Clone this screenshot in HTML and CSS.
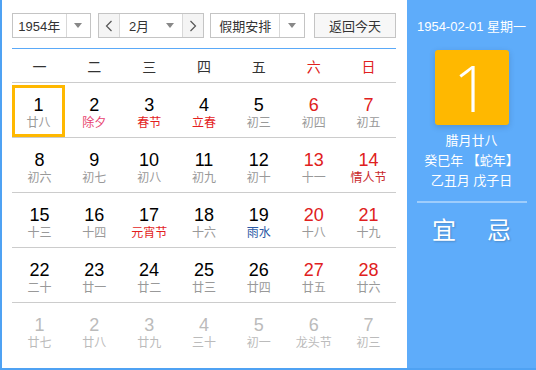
FILE: index.html
```html
<!DOCTYPE html>
<html lang="zh-CN">
<head>
    <meta charset="UTF-8">
    <title>万年历</title>
    <link rel="stylesheet" href="styles.css">
</head>
<body>
    <div class="calendar">
        <div class="main">
            <div class="toolbar">
                <div class="select year">
                    <span class="value">1954年</span>
                    <span class="arrow"><i></i></span>
                </div>
                <div class="select month">
                    <span class="step">
                        <svg width="8" height="12" viewBox="0 0 8 12"><polyline points="6.5,1 1.5,6 6.5,11" fill="none" stroke="#555" stroke-width="1.2"/></svg>
                    </span>
                    <span class="value">2月</span>
                    <span class="arrow"><i></i></span>
                    <span class="step">
                        <svg width="8" height="12" viewBox="0 0 8 12"><polyline points="1.5,1 6.5,6 1.5,11" fill="none" stroke="#555" stroke-width="1.2"/></svg>
                    </span>
                </div>
                <div class="select holiday">
                    <span class="value">假期安排</span>
                    <span class="arrow"><i></i></span>
                </div>
                <button class="today">返回今天</button>
            </div>

            <div class="week">
                <span>一</span><span>二</span><span>三</span><span>四</span><span>五</span>
                <span class="red">六</span><span class="red">日</span>
            </div>

            <div class="days">
                <div class="row">
                    <div class="day selected"><b>1</b><em>廿八</em></div>
                    <div class="day"><b>2</b><em class="eve">除夕</em></div>
                    <div class="day"><b>3</b><em class="fest">春节</em></div>
                    <div class="day"><b>4</b><em class="fest">立春</em></div>
                    <div class="day"><b>5</b><em>初三</em></div>
                    <div class="day weekend"><b>6</b><em>初四</em></div>
                    <div class="day weekend"><b>7</b><em>初五</em></div>
                </div>
                <div class="row">
                    <div class="day"><b>8</b><em>初六</em></div>
                    <div class="day"><b>9</b><em>初七</em></div>
                    <div class="day"><b>10</b><em>初八</em></div>
                    <div class="day"><b>11</b><em>初九</em></div>
                    <div class="day"><b>12</b><em>初十</em></div>
                    <div class="day weekend"><b>13</b><em>十一</em></div>
                    <div class="day weekend"><b>14</b><em class="valentine">情人节</em></div>
                </div>
                <div class="row">
                    <div class="day"><b>15</b><em>十三</em></div>
                    <div class="day"><b>16</b><em>十四</em></div>
                    <div class="day"><b>17</b><em class="fest">元宵节</em></div>
                    <div class="day"><b>18</b><em>十六</em></div>
                    <div class="day"><b>19</b><em class="term">雨水</em></div>
                    <div class="day weekend"><b>20</b><em>十八</em></div>
                    <div class="day weekend"><b>21</b><em>十九</em></div>
                </div>
                <div class="row">
                    <div class="day"><b>22</b><em>二十</em></div>
                    <div class="day"><b>23</b><em>廿一</em></div>
                    <div class="day"><b>24</b><em>廿二</em></div>
                    <div class="day"><b>25</b><em>廿三</em></div>
                    <div class="day"><b>26</b><em>廿四</em></div>
                    <div class="day weekend"><b>27</b><em>廿五</em></div>
                    <div class="day weekend"><b>28</b><em>廿六</em></div>
                </div>
                <div class="row">
                    <div class="day other"><b>1</b><em>廿七</em></div>
                    <div class="day other"><b>2</b><em>廿八</em></div>
                    <div class="day other"><b>3</b><em>廿九</em></div>
                    <div class="day other"><b>4</b><em>三十</em></div>
                    <div class="day other"><b>5</b><em>初一</em></div>
                    <div class="day other"><b>6</b><em>龙头节</em></div>
                    <div class="day other"><b>7</b><em>初三</em></div>
                </div>
            </div>
        </div>

        <div class="side">
            <div class="date">1954-02-01 星期一</div>
            <div class="big">1</div>
            <div class="lunar">
                <p>腊月廿八</p>
                <p>癸巳年 【蛇年】</p>
                <p>乙丑月 戊子日</p>
            </div>
            <div class="divider"></div>
            <div class="yiji">
                <span>宜</span>
                <span>忌</span>
            </div>
        </div>
    </div>
</body>
</html>
```

FILE: styles.css
```css
* {
    box-sizing: border-box;
}
body {
    margin: 0;
    font-family: "Liberation Sans", "Noto Sans CJK SC", sans-serif;
    background: #fff;
}
.calendar {
    display: flex;
    width: 536px;
    height: 370px;
    border-left: 2px solid #4fa2f3;
    border-bottom: 2px solid #4fa2f3;
}
.main {
    width: 405px;
    padding: 13px 11px 0 10px;
    background: #fff;
}

/* toolbar */
.toolbar {
    display: flex;
    height: 25px;
    padding-bottom: 10px;
    border-bottom: 1px solid #5aa9f8;
    box-sizing: content-box;
}
.select {
    display: flex;
    height: 25px;
    border: 1px solid #c4c4c4;
    font-size: 13px;
    color: #333;
    background: #fff;
}
.select .value {
    display: flex;
    align-items: center;
    justify-content: center;
    border-right: 1px solid #d8d8d8;
}
.select .arrow {
    display: flex;
    align-items: center;
    justify-content: center;
    width: 24px;
}
.select .arrow i {
    width: 0;
    height: 0;
    border-left: 4px solid transparent;
    border-right: 4px solid transparent;
    border-top: 5px solid #888;
}
.year {
    width: 79px;
}
.year .value {
    width: 55px;
}
.month {
    width: 106px;
    margin-left: 7px;
}
.month .step {
    display: flex;
    align-items: center;
    justify-content: center;
    width: 21px;
    background: #f4f4f4;
}
.month .step:first-child {
    border-right: 1px solid #d8d8d8;
}
.month .step:last-child {
    border-left: 1px solid #d8d8d8;
}
.month .value {
    width: 38px;
    border-right: none;
}
.holiday {
    width: 95px;
    margin-left: 6px;
}
.holiday .value {
    width: 70px;
}
.today {
    width: 82px;
    height: 25px;
    margin-left: auto;
    border: 1px solid #c4c4c4;
    background: #f7f7f7;
    font: 13px "Liberation Sans", "Noto Sans CJK SC", sans-serif;
    color: #333;
    padding: 0;
}

/* grid */
.week,
.row {
    display: grid;
    grid-template-columns: repeat(7, 1fr);
}
.week {
    height: 34px;
    align-items: center;
    text-align: center;
    font-size: 14px;
    color: #333;
    border-bottom: 1px solid #ccc;
}
.red {
    color: #e02020;
}
.row {
    height: 55px;
    border-bottom: 1px solid #ccc;
}
.row:last-child {
    border-bottom: none;
}
.day {
    display: flex;
    flex-direction: column;
    align-items: center;
    padding-top: 10px;
    margin-top: 2px;
}
.day b {
    font-weight: normal;
    font-size: 18px;
    line-height: 20px;
    color: #000;
}
.day em {
    font-style: normal;
    font-size: 12px;
    line-height: 17px;
    color: #999;
}
.day.selected {
    border: 3px solid #ffb800;
    padding-top: 7px;
    margin-right: 2px;
}
.day.weekend b {
    color: #e02020;
}
.day .eve {
    color: #e83f6f;
}
.day .fest {
    color: #e31e1e;
}
.day .valentine {
    color: #c8292b;
}
.day .term {
    color: #2b5aa6;
}
.day.other b,
.day.other em {
    color: #bbb;
}

/* side panel */
.side {
    flex: 1;
    background: #5eacfa;
    color: #fff;
    display: flex;
    flex-direction: column;
    align-items: center;
    padding-top: 18px;
}
.date {
    font-size: 13px;
    line-height: 18px;
}
.big {
    width: 74px;
    height: 75px;
    margin-top: 14px;
    background: #ffb800;
    border-radius: 3px;
    box-shadow: 0 2px 6px rgba(0, 0, 0, 0.15);
    font-family: "Open Sans", "Liberation Sans", sans-serif;
    font-weight: 300;
    font-size: 64px;
    line-height: 75px;
    text-align: center;
}
.lunar {
    margin-top: 6px;
    text-align: center;
    font-size: 13px;
    line-height: 20px;
}
.lunar p {
    margin: 0;
}
.divider {
    width: 110px;
    height: 2px;
    margin-top: 10px;
    background: rgba(255, 255, 255, 0.4);
}
.yiji {
    display: flex;
    gap: 31px;
    margin-top: 13px;
    font-size: 24px;
    line-height: 30px;
    text-shadow: 1px 1px 2px rgba(0, 0, 0, 0.2);
}
```
